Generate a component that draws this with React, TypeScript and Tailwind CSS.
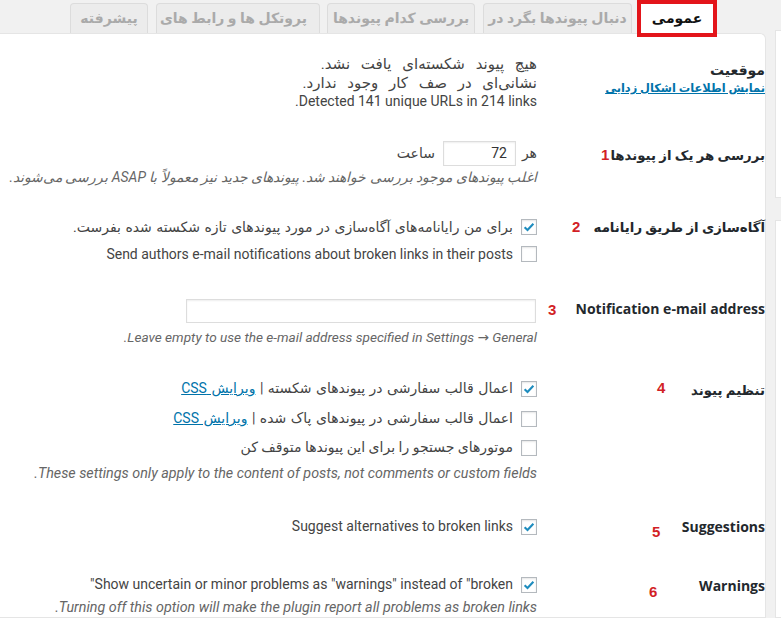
import React from "react";

const Check = ({ checked }: { checked?: boolean }) => (
  <span className="w-4 h-4 shrink-0 border border-[#b4b9be] bg-white shadow-[inset_0_1px_2px_rgba(0,0,0,0.1)] flex items-center justify-center">
    {checked && (
      <svg viewBox="0 0 16 16" className="w-[14px] h-[14px]">
        <path d="M3 8.2 L6.3 11.4 L13 4.2" fill="none" stroke="#1e8cbe" strokeWidth="2.4" strokeLinejoin="miter" />
      </svg>
    )}
  </span>
);

const Num = ({ n, className }: { n: string; className: string }) => (
  <span className={"absolute text-[15px] leading-none font-bold text-[#d21f26] font-['Liberation_Sans',sans-serif] " + className}>{n}</span>
);

const Tab = ({ label, w, ml, clip }: { label: string; w: string; ml: string; clip?: boolean }) => (
  <div className={"h-[30px] overflow-hidden border border-b-0 border-[#dcdcdc] rounded-t-[4px] bg-[#ececec] text-[#aaaaaa] font-bold text-[14px] flex items-center " + w + " " + ml}>
    <span className={clip ? "block w-[150px] overflow-hidden whitespace-nowrap text-right" : "whitespace-nowrap"}>{label}</span>
  </div>
);

const faLabel = "text-[13.3px] leading-[18px] font-bold text-[#23282d]";
const enLabel = "text-[14px] leading-[18px] font-bold text-[#23282d] font-['Open_Sans','DejaVu_Sans',sans-serif]";

export default function App() {
  return (
    <div className="w-[781px] h-[618px] overflow-hidden bg-[#f1f1f1] flex font-['Roboto','DejaVu_Sans',sans-serif] text-[#444]" dir="ltr">
      <div className="w-[766px] shrink-0 flex flex-col" dir="rtl">
        <div className="h-[33px] flex items-end pr-[49px] shrink-0">
          <div className="relative z-10 w-[80px] h-[37px] -mb-[4px] ml-[5px] bg-white border-[4px] border-[#e3151a] flex items-center justify-center text-[14px] font-bold text-[#111]">
            عمومی
          </div>
          <Tab label="دنبال پیوندها بگرد در" w="w-[149px] justify-center" ml="ml-[8px]" />
          <Tab label="بررسی کدام پیوندها" w="w-[148px] justify-center" ml="ml-[7px]" />
          <Tab label="پروتکل ها و رابط های برنامه" w="w-[164px] justify-start pr-[12px]" ml="ml-[8px]" clip />
          <Tab label="پیشرفته" w="w-[78px] justify-center" ml="ml-0" />
        </div>
        <div className="flex-1 bg-white border border-l-0 border-[#e5e5e5] rounded-tr-[6px]">
          {/* Row 1: status */}
          <div className="flex mt-[21px]">
            <div className="w-[228px] shrink-0 pt-[6px]">
              <div className="text-[14px] leading-[18px] font-bold text-[#23282d]">موقعیت</div>
              <a className="block text-[11.4px] leading-[18px] font-bold text-[#0073aa] underline">نمایش اطلاعات اشکال زدایی</a>
            </div>
            <div className="flex-1 leading-[18.5px]">
              <div className="text-[15px] [word-spacing:7px]">هیچ پیوند شکسته‌ای یافت نشد.</div>
              <div className="text-[15px] [word-spacing:7px]">نشانی‌ای در صف کار وجود ندارد.</div>
              <div className="text-[14px]">Detected 141 unique URLs in 214 links.</div>
            </div>
          </div>

          {/* Row 2: check every */}
          <div className="flex mt-[30px]">
            <div className={"w-[228px] shrink-0 pt-[5px] " + faLabel}>
              بررسی هر یک از پیوندها<span className="text-[#d21f26] text-[15px] font-['Liberation_Sans',sans-serif] mr-[1px]">1</span>
            </div>
            <div className="flex-1">
              <div className="flex items-center h-[25px] text-[14px]">
                <span>هر</span>
                <div className="w-[73px] h-[25px] mr-[6px] ml-[8px] border border-[#dddddd] shadow-[inset_0_1px_2px_rgba(0,0,0,0.07)] flex items-center pr-[8px] text-[#333]">72</div>
                <span>ساعت</span>
              </div>
              <div className="mt-[2px] text-[13.9px] leading-[18px] italic text-[#666]">
                اغلب پیوندهای موجود بررسی خواهند شد. پیوندهای جدید نیز معمولاً با ASAP بررسی می‌شوند.
              </div>
            </div>
          </div>

          {/* Row 3: notifications */}
          <div className="flex mt-[28px]">
            <div className={"w-[228px] shrink-0 pt-[5px] relative " + faLabel}>
              آگاه‌سازی از طریق رایانامه
              <Num n="2" className="left-[35px] top-[5px]" />
            </div>
            <div className="flex-1 text-[14px]">
              <div className="flex items-center gap-2 h-[27px]">
                <Check checked />
                <span className="[word-spacing:1px]">برای من رایانامه‌های آگاه‌سازی در مورد پیوندهای تازه شکسته شده بفرست.</span>
              </div>
              <div className="flex items-center gap-2 h-[27px]">
                <Check />
                <span>Send authors e-mail notifications about broken links in their posts</span>
              </div>
            </div>
          </div>

          {/* Row 4: email address */}
          <div className="flex mt-[31px]">
            <div className={"w-[228px] shrink-0 pt-[1px] relative " + enLabel}>
              Notification e-mail address
              <Num n="3" className="left-[11px] top-[3px]" />
            </div>
            <div className="flex-1">
              <div className="w-[350px] h-[24px] mr-[1px] border border-[#dddddd] shadow-[inset_0_1px_2px_rgba(0,0,0,0.07)]" />
              <div className="mt-[5px] text-[13.6px] leading-[18px] italic text-[#666]">
                Leave empty to use the e-mail address specified in Settings → General.
              </div>
            </div>
          </div>

          {/* Row 5: link tweaks */}
          <div className="flex mt-[28px]">
            <div className={"w-[228px] shrink-0 pt-[8px] relative " + faLabel}>
              تنظیم پیوند
              <Num n="4" className="left-[120px] top-[6px]" />
            </div>
            <div className="flex-1 text-[14px]">
              <div className="flex items-center gap-2 h-[30px]">
                <Check checked />
                <span className="[word-spacing:1px]">
                  اعمال قالب سفارشی در پیوندهای شکسته | <a className="text-[#0073aa] underline">ویرایش CSS</a>
                </span>
              </div>
              <div className="flex items-center gap-2 h-[30px]">
                <Check />
                <span className="[word-spacing:1px]">
                  اعمال قالب سفارشی در پیوندهای پاک شده | <a className="text-[#0073aa] underline">ویرایش CSS</a>
                </span>
              </div>
              <div className="flex items-center gap-2 h-[28px]">
                <Check />
                <span>موتورهای جستجو را برای این پیوندها متوقف کن</span>
              </div>
              <div className="mt-[2px] text-[14.3px] leading-[18px] italic text-[#666]">
                These settings only apply to the content of posts, not comments or custom fields.
              </div>
            </div>
          </div>

          {/* Row 6: suggestions */}
          <div className="flex mt-[31px]">
            <div className={"w-[228px] shrink-0 pt-[5px] relative " + enLabel}>
              Suggestions
              <Num n="5" className="left-[115px] top-[11px]" />
            </div>
            <div className="flex-1 text-[14px]">
              <div className="flex items-center gap-2 h-[28px]">
                <Check checked />
                <span>Suggest alternatives to broken links</span>
              </div>
            </div>
          </div>

          {/* Row 7: warnings */}
          <div className="flex mt-[31px]">
            <div className={"w-[228px] shrink-0 pt-[5px] relative " + enLabel}>
              Warnings
              <Num n="6" className="left-[112px] top-[12px]" />
            </div>
            <div className="flex-1 text-[14px]">
              <div className="flex items-center gap-2 h-[26px]">
                <Check checked />
                <span>Show uncertain or minor problems as "warnings" instead of "broken"</span>
              </div>
              <div className="text-[14.3px] leading-[18px] italic text-[#666]">
                Turning off this option will make the plugin report all problems as broken links.
              </div>
            </div>
          </div>
        </div>
      </div>
      <div className="ml-[9px] flex-1 flex flex-col pt-[30px]">
        <div className="h-[168px] bg-white border border-[#e5e5e5] border-r-0" />
        <div className="mt-[22px] flex-1 bg-white border border-[#e5e5e5] border-r-0" />
      </div>
    </div>
  );
}
